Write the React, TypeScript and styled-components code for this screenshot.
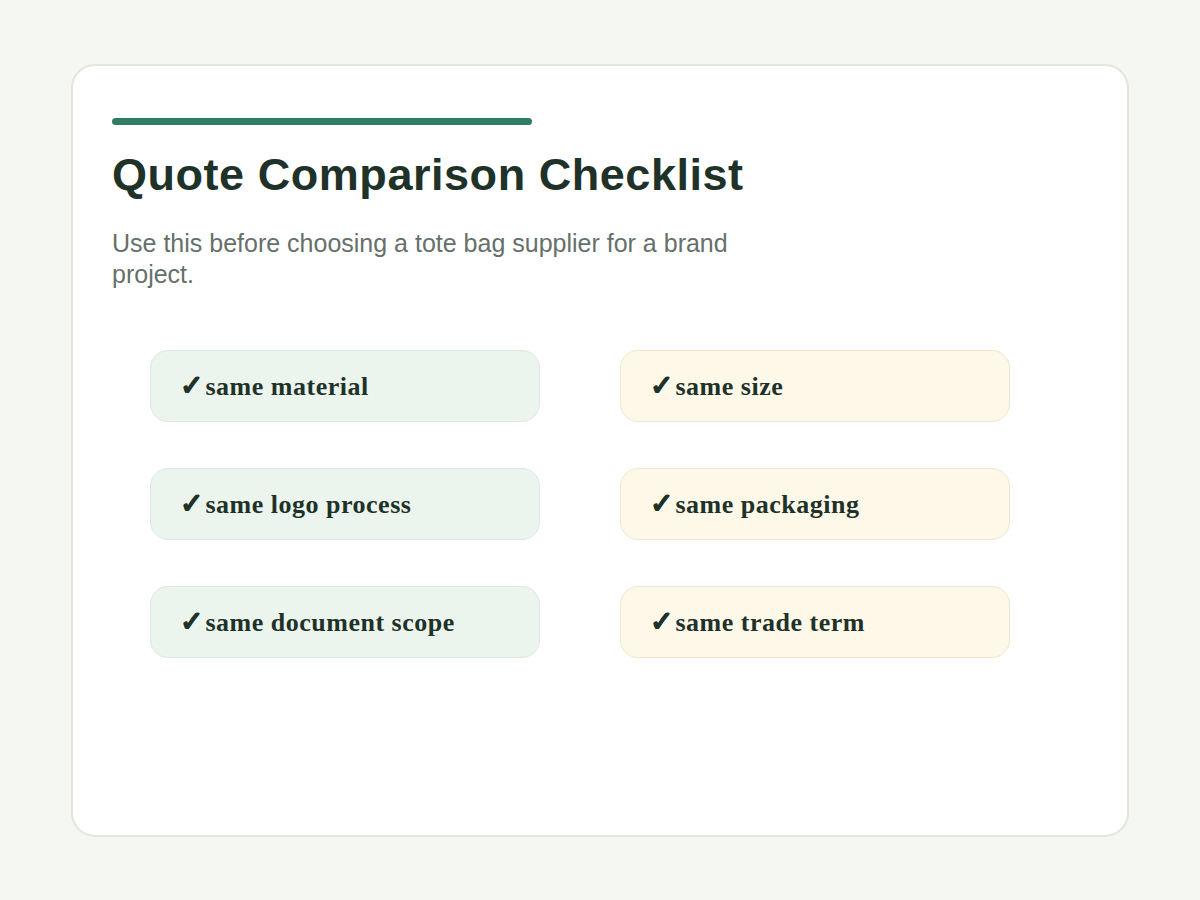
import React from "react";
import styled, { createGlobalStyle } from "styled-components";

const Global = createGlobalStyle`
  html, body { margin: 0; padding: 0; background: #f5f7f2; }
  #root { width: 1200px; height: 900px; }
`;
const Page = styled.div`
  box-sizing: border-box; width: 1200px; height: 900px; padding: 64px 71px;
`;
const Card = styled.main`
  box-sizing: border-box; width: 1058px; height: 773px; background: #fff;
  border: 2px solid #e1e7dc; border-radius: 24px; padding: 52px 39px 0;
`;
const Accent = styled.div`
  width: 420px; height: 7px; border-radius: 4px; background: #2f7d62;
`;
const Title = styled.h1`
  margin: 23px 0 0; font: 700 45px/54px "Liberation Sans", Arial, sans-serif;
  color: #1f3229; letter-spacing: 0.54px;
`;
const Subtitle = styled.p`
  margin: 26px 0 0; width: 660px; font: 400 25px/31px "Liberation Sans", Arial, sans-serif; color: #66706a;
`;
const Grid = styled.div`
  display: grid; grid-template-columns: 390px 390px; column-gap: 80px; row-gap: 46px;
  margin: 60px 0 0 38px;
`;
const Item = styled.div<{ $tone: "green" | "amber" }>`
  box-sizing: border-box; height: 72px; display: flex; align-items: center; padding: 2px 28px 0;
  border-radius: 18px;
  background: ${p => p.$tone === "green" ? "#ebf4ed" : "#fef8e9"};
  border: 1px solid ${p => p.$tone === "green" ? "#dce9df" : "#f1e6cd"};
  font: 700 26px/32px "Liberation Serif", "Times New Roman", serif;
  color: #1f3229; letter-spacing: 0.5px; white-space: pre;
`;
const Check = styled.span`
  font-size: 28px; line-height: 32px; letter-spacing: 0; margin: -3px 3px 0 0.5px;
  -webkit-text-stroke: 0.6px #1f3229;
`;
const items: [string, "green" | "amber"][] = [
  ["same material", "green"], ["same size", "amber"],
  ["same logo process", "green"], ["same packaging", "amber"],
  ["same document scope", "green"], ["same trade term", "amber"],
];
export default function App() {
  return (
    <Page>
      <Global />
      <Card>
        <Accent />
        <Title>Quote Comparison Checklist</Title>
        <Subtitle>Use this before choosing a tote bag supplier for a brand project.</Subtitle>
        <Grid>
          {items.map(([t, tone]) => <Item key={t} $tone={tone}><Check>✓</Check>{t}</Item>)}
        </Grid>
      </Card>
    </Page>
  );
}
